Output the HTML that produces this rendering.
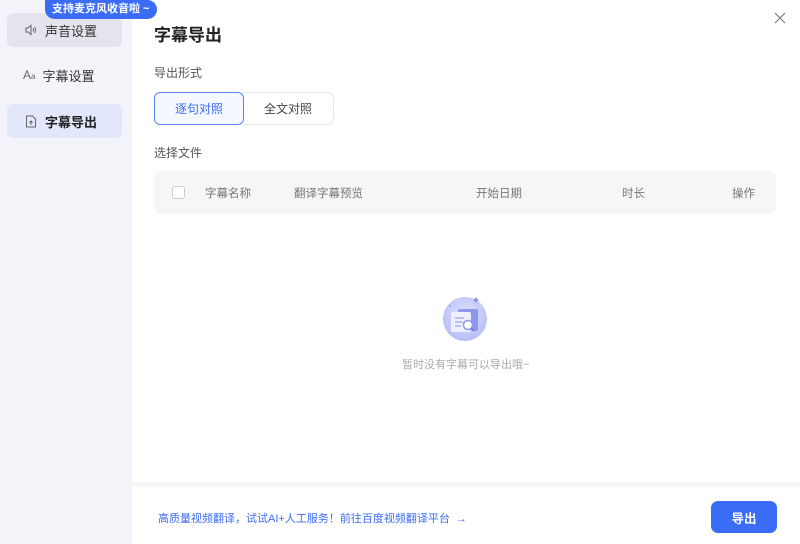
<!DOCTYPE html>
<html><head><meta charset="utf-8"><style>
*{margin:0;padding:0;box-sizing:border-box}
body{width:800px;height:544px;position:relative;overflow:hidden;background:#fff;font-family:"Liberation Sans","Noto Sans CJK SC",sans-serif;color:#222}
.side{position:absolute;left:0;top:0;width:132px;height:544px;background:#f3f4fa}
.item{position:absolute;left:7px;width:115px;height:34px;border-radius:6px;font-size:13px;display:flex;align-items:center;padding-left:18px;color:#333}
.item svg{margin-right:8px}
.tip{position:absolute;left:45px;top:0;height:19px;padding:0 8px 0 7px;background:#3b6cf6;color:#fff;font-size:11px;line-height:19px;border-radius:0 10px 10px 10px;font-weight:bold}
.abs{position:absolute}
.btn{position:absolute;top:92px;height:33px;border:1px solid #e6e8ee;font-size:12px;display:flex;align-items:center;justify-content:center;color:#444}
.th{position:absolute;top:185px;font-size:11.5px;color:#777}
</style></head><body>
<div class="side">
<div class="item" style="top:13px;background:#e4e5ec"><svg width="12" height="12" viewBox="0 0 12 12" fill="none" stroke="#666" stroke-width="1"><path d="M1 4h2l3-2.5v9L3 8H1z"/><path d="M8 4.5q1 1.5 0 3M9.5 3q2 3 0 6"/></svg>声音设置</div>
<div class="item" style="top:58px"><span style="font-size:12px;color:#666;margin-right:7px;margin-left:-2px">A<span style="font-size:8px">a</span></span>字幕设置</div>
<div class="item" style="top:104px;background:#e2e7fb;font-weight:bold;color:#222"><svg width="12" height="13" viewBox="0 0 12 13" fill="none" stroke="#666" stroke-width="1"><path d="M1.5 1h6l3 3v8h-9z"/><path d="M6 10V6M4.5 7.5L6 6l1.5 1.5"/></svg>字幕导出</div>
</div>
<div class="tip">支持麦克风收音啦 ~</div>
<svg class="abs" style="left:774px;top:12px" width="12" height="12" viewBox="0 0 12 12" stroke="#777" stroke-width="1.1"><path d="M1 1l10 10M11 1L1 11"/></svg>
<div class="abs" style="left:154px;top:21px;font-size:17px;font-weight:bold;color:#222">字幕导出</div>
<div class="abs" style="left:154px;top:64px;font-size:12px;color:#555">导出形式</div>
<div class="btn" style="left:154px;width:90px;border:1px solid #5b85f5;background:#f5f8ff;color:#3b6cf6;border-radius:6px">逐句对照</div>
<div class="btn" style="left:243px;width:91px;border-left:none;border-radius:0 6px 6px 0">全文对照</div>
<div class="abs" style="left:154px;top:144px;font-size:12px;color:#555">选择文件</div>
<div class="abs" style="left:154px;top:171px;width:622px;height:43px;background:#f6f6f8;border-radius:7px"></div>
<div class="abs" style="left:172px;top:186px;width:13px;height:13px;border:1px solid #ccc;border-radius:3px;background:#fff"></div>
<div class="th" style="left:205px">字幕名称</div>
<div class="th" style="left:294px">翻译字幕预览</div>
<div class="th" style="left:476px">开始日期</div>
<div class="th" style="left:622px">时长</div>
<div class="th" style="left:732px">操作</div>
<svg class="abs" style="left:436px;top:292px" width="60" height="52" viewBox="0 0 60 52">
<defs><radialGradient id="g" cx="50%" cy="40%" r="60%"><stop offset="0" stop-color="#dfe3fd"/><stop offset="1" stop-color="#b6bdf5"/></radialGradient></defs>
<circle cx="29" cy="27" r="22" fill="url(#g)"/>
<rect x="22" y="17" width="20" height="22" rx="2" fill="#8e97ee"/>
<rect x="15" y="20" width="20" height="20" rx="2" fill="#eef0ff"/>
<path d="M19 26h9M19 30h8M19 34h6" stroke="#9aa2ef" stroke-width="1.3"/>
<circle cx="32" cy="33" r="4.5" fill="#fff" stroke="#8e97ee" stroke-width="1.5"/>
<path d="M35 36l3 3" stroke="#6f7ae8" stroke-width="1.8"/>
<path d="M40 5l1 2 2 1-2 1-1 2-1-2-2-1 2-1z" fill="#7b86ee"/>
<circle cx="14" cy="14" r="1" fill="#a0a8f2"/>
</svg>
<div class="abs" style="left:402px;top:356px;font-size:11px;color:#aaa">暂时没有字幕可以导出哦~</div>
<div class="abs" style="left:132px;top:482px;width:668px;height:5px;background:#f7f7f9"></div>
<div class="abs" style="left:158px;top:510px;font-size:11px;color:#3b6cf6">高质量视频翻译，试试AI+人工服务！前往百度视频翻译平台 &nbsp;→</div>
<div class="abs" style="left:711px;top:501px;width:66px;height:32px;background:#3b6cf6;border-radius:7px;color:#fff;font-size:12.5px;display:flex;align-items:center;justify-content:center;font-weight:bold">导出</div>
</body></html>
